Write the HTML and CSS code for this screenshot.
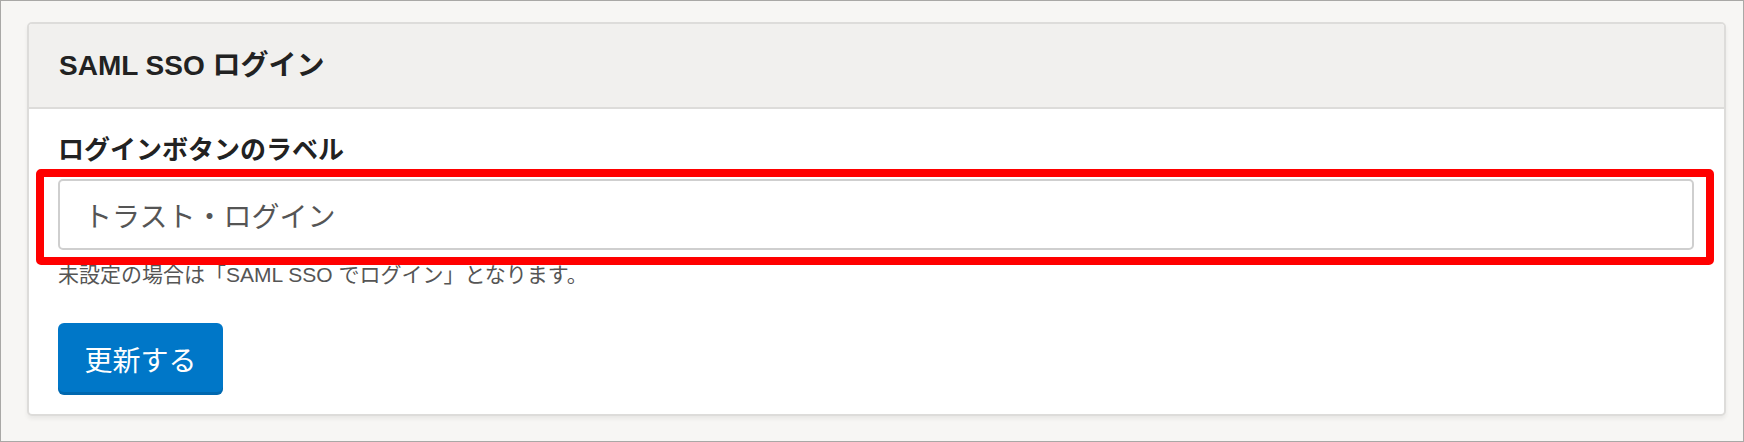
FILE: index.html
```html
<!DOCTYPE html>
<html lang="ja">
<head>
<meta charset="utf-8">
<title>SAML SSO ログイン</title>
<link rel="stylesheet" href="styles.css">
</head>
<body>
<div class="page">
  <section class="card">
    <header class="card-header">
      <h2 class="card-title">SAML SSO ログイン</h2>
    </header>
    <div class="card-body">
      <label class="field-label" for="label-input">ログインボタンのラベル</label>
      <div class="field">
        <input id="label-input" class="text-input" type="text" value="トラスト・ログイン">
        <div class="highlight"></div>
      </div>
      <p class="help">未設定の場合は「SAML SSO でログイン」となります。</p>
      <button class="btn-primary" type="button">更新する</button>
    </div>
  </section>
</div>
</body>
</html>
```

FILE: styles.css
```css
* { box-sizing: border-box; }

html, body {
  margin: 0;
  padding: 0;
}

body {
  font-family: "Liberation Sans", "Noto Sans CJK JP", sans-serif;
  color: #222;
}

.page {
  width: 1744px;
  height: 442px;
  border: 1px solid #a9a8a6;
  background: #f7f6f4;
  padding: 21px 17px 0 26px;
}

.card {
  background: #fff;
  border: 2px solid #dddcda;
  border-radius: 5px;
  box-shadow: 0 3px 4px rgba(0, 0, 0, 0.06);
  overflow: hidden;
}

.card-header {
  background: #f1f0ee;
  border-bottom: 2px solid #dddcda;
  height: 85px;
  display: flex;
  align-items: center;
  padding: 0 0 0 30px;
}

.card-title {
  margin: 0;
  font-size: 28px;
  font-weight: 700;
  color: #222;
  line-height: 1;
  padding-top: 0;
}

.card-body {
  padding: 23px 30px 19px 29px;
  display: flex;
  flex-direction: column;
  align-items: flex-start;
}

.field-label {
  font-size: 26px;
  font-weight: 700;
  line-height: 36px;
  color: #222;
}

.field {
  position: relative;
  width: 1636px;
  margin-top: 11px;
}

.text-input {
  display: block;
  width: 100%;
  height: 71px;
  border: 2px solid #cfcfcf;
  border-radius: 5px;
  padding: 0 0 0 24px;
  font-family: "Noto Sans CJK JP", sans-serif;
  font-size: 28px;
  color: #555;
  background: #fff;
  outline: none;
}

.highlight {
  position: absolute;
  left: -22px;
  top: -10px;
  right: -20px;
  bottom: -15px;
  border: 8px solid #ff0000;
  border-radius: 5px;
  pointer-events: none;
}

.help {
  margin: 10px 0 0;
  font-size: 21px;
  line-height: 29px;
  color: #555;
}

.btn-primary {
  margin-top: 34px;
  width: 165px;
  height: 72px;
  border: none;
  border-radius: 6px;
  background: #0077c8;
  box-shadow: inset 0 -3px 0 rgba(0, 0, 0, 0.12);
  color: #fff;
  font-family: "Noto Sans CJK JP", sans-serif;
  font-size: 28px;
  padding: 0;
  cursor: pointer;
}
```
